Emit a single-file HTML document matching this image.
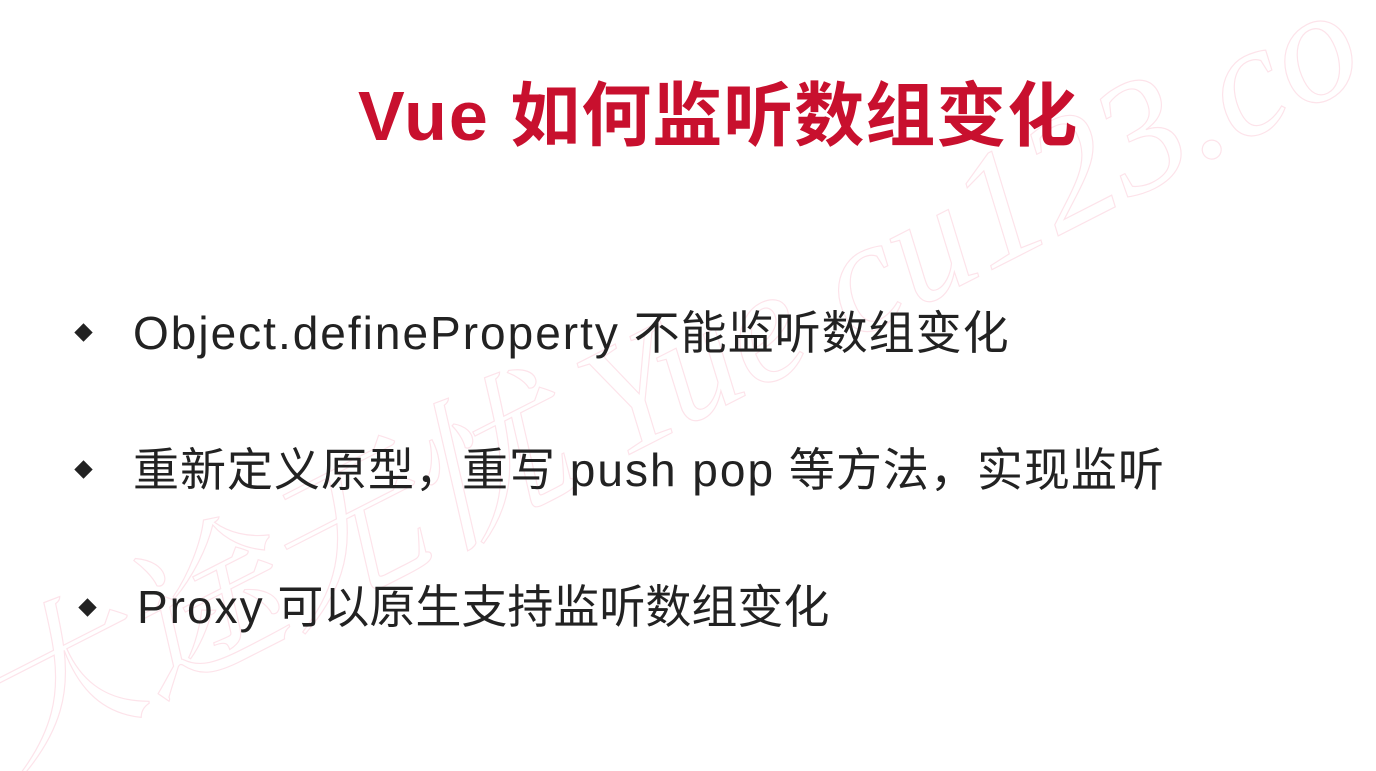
<!DOCTYPE html>
<html><head><meta charset="utf-8"><style>
html,body{margin:0;padding:0;}
body{width:1376px;height:771px;background:#fff;position:relative;overflow:hidden;font-family:"Liberation Sans","Noto Sans CJK SC",sans-serif;}
.t{position:absolute;white-space:nowrap;}
.title{left:358px;top:76px;font-size:70px;font-weight:bold;color:#c8102e;line-height:80px;letter-spacing:1px;}
.title .l{letter-spacing:2px;}
.li{font-size:46px;color:#222;line-height:56px;}
.li .l{letter-spacing:2px;}
.b{position:absolute;width:13px;height:13px;background:#222;transform:rotate(45deg);}
</style></head><body>
<svg width="1376" height="771" style="position:absolute;left:0;top:0">
<g fill="none" stroke="#fde3ea" stroke-width="1.2" font-family="Liberation Serif,Noto Serif CJK SC,serif" font-style="italic">
<text x="0" y="0" font-size="160" transform="translate(10,770) rotate(-27)">大途无忧 Yue cu123.co</text>
</g>
</svg>
<div class="t title"><span class="l">Vue</span> 如何监听数组变化</div>
<div class="b" style="left:77px;top:326px"></div>
<div class="t li" style="left:133px;top:305px;letter-spacing:1px"><span class="l">Object.defineProperty</span> 不能监听数组变化</div>
<div class="b" style="left:77px;top:463px"></div>
<div class="t li" style="left:133px;top:442px;letter-spacing:1px">重新定义原型，重写 <span class="l">push pop</span> 等方法，实现监听</div>
<div class="b" style="left:81px;top:601px"></div>
<div class="t li" style="left:137px;top:579px"><span class="l">Proxy</span> 可以原生支持监听数组变化</div>
</body></html>
